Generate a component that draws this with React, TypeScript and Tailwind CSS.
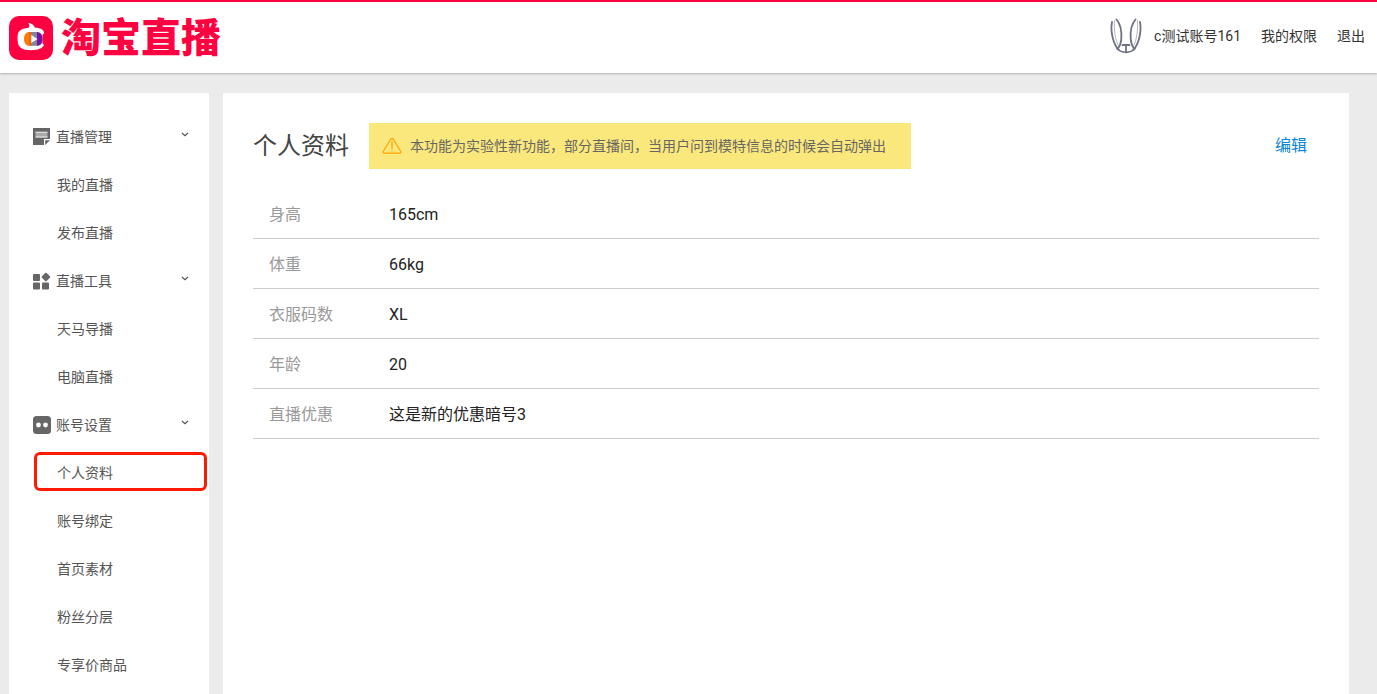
import { useState } from "react";
import type { ReactNode } from "react";
import { clsx } from "clsx";

interface MenuGroup {
  title: string;
  icon: ReactNode;
  items: string[];
}

interface ProfileField {
  label: string;
  value: string;
}

const NoteIcon = () => (
  <svg width="18" height="18" viewBox="0 0 18 18" aria-hidden="true">
    <path d="M0 0H17V11H11V17H0Z" fill="#666" />
    <path d="M12.2 12.2H17L12.2 17Z" fill="#666" />
    <path d="M2.5 4h12v5.5h-12z" fill="#aaa" />
    <path d="M2.5 4.2h12M2.5 9h12" stroke="#eee" strokeWidth="1" />
  </svg>
);

const ToolsIcon = () => (
  <svg width="18" height="18" viewBox="0 0 18 18" fill="#666" aria-hidden="true">
    <rect x="0" y="2" width="7" height="7" rx="1" />
    <rect x="0" y="10.5" width="7" height="7" rx="1" />
    <rect x="9" y="10.5" width="7" height="7" rx="1" />
    <rect x="9.6" y="1.7" width="6.6" height="6.6" rx="1" transform="rotate(45 12.9 5)" />
  </svg>
);

const AccountIcon = () => (
  <svg width="18" height="18" viewBox="0 0 18 18" aria-hidden="true">
    <rect width="18" height="18" rx="3.5" fill="#666" />
    <circle cx="5.5" cy="9" r="2.4" fill="#fff" />
    <circle cx="12.5" cy="9" r="2.4" fill="#fff" />
  </svg>
);

const menu: MenuGroup[] = [
  { title: "直播管理", icon: <NoteIcon />, items: ["我的直播", "发布直播"] },
  { title: "直播工具", icon: <ToolsIcon />, items: ["天马导播", "电脑直播"] },
  {
    title: "账号设置",
    icon: <AccountIcon />,
    items: ["个人资料", "账号绑定", "首页素材", "粉丝分层", "专享价商品"],
  },
];

const profile: ProfileField[] = [
  { label: "身高", value: "165cm" },
  { label: "体重", value: "66kg" },
  { label: "衣服码数", value: "XL" },
  { label: "年龄", value: "20" },
  { label: "直播优惠", value: "这是新的优惠暗号3" },
];

function Logo() {
  return (
    <a href="#" className="flex items-center gap-2">
      <svg width="44" height="44" viewBox="0 0 44 44" aria-hidden="true">
        <rect width="44" height="44" rx="10" fill="#ff0040" />
        <path
          d="M20 7c2.600.5 5 2.200 6 4.800 5 0 8.800 1.800 9.200 5.400l-1.700 1.600v8.700l1.500 1.500c-1.600 3.400-6 5.200-13 5.200-9 0-12.900-2.700-13.300-9.200-.2-2.600-.2-5 .2-7 .6-3.400 4.300-5.700 10.900-6.300.8-1.700.9-3-.5-4.200z"
          fill="#fff"
        />
        <path d="M21 16v13.800c-3.800.1-6-2.600-6-6.900s2.200-6.900 6-6.900z" fill="#ff7a00" />
        <path d="M20 16h3v13.800h-3z" fill="#f0631a" />
        <path d="M22.500 16h6v13.800h-6z" fill="#7d8793" />
        <path d="M28 16c3.800.2 5.500 2.900 5.500 6.900s-1.700 6.800-5.500 6.900z" fill="#7a0fa8" />
        <path d="M22.300 18.900 28.500 23l-6.200 4.100z" fill="#fff" />
      </svg>
      <span className="pt-0.5 text-[40px] leading-10 font-black text-[#ff0040]">淘宝直播</span>
    </a>
  );
}

function Avatar() {
  return (
    <svg width="32" height="36" viewBox="0 0 32 36" fill="none" stroke="#6f7280" strokeLinecap="round" aria-hidden="true">
      <path d="M2 4C.2 13 3 26 8.500 31.500" strokeWidth="1.800" />
      <path d="M6.500 1.500C10.500 6 11.800 14 11.300 21c-.3 4-1.300 7-3.300 9.500" strokeWidth="1.800" />
      <path d="M4.500 2.500C4 12 5 21 8.500 28" stroke="#b5b7bf" strokeWidth="1" />
      <path d="M30 4C31.800 13 29 26 23.500 31.500" strokeWidth="1.800" />
      <path d="M25.500 1.500C21.500 6 20.200 14 20.700 21c.3 4 1.300 7 3.300 9.500" strokeWidth="1.800" />
      <path d="M27.500 2.500C28 12 27 21 23.500 28" stroke="#b5b7bf" strokeWidth="1" />
      <path d="M7 30.500C11.500 35.600 20.500 35.600 25 30.500" strokeWidth="1.800" />
      <path d="M12.500 27h7M16 27v7" strokeWidth="1.800" />
    </svg>
  );
}

function Header() {
  return (
    <header className="flex items-center justify-between border-t-2 border-[#ff0040] bg-white h-[73px] pl-[9px] pr-3 shadow-[0_1px_2px_rgba(0,0,0,0.25)]">
      <Logo />
      <nav className="flex items-center gap-5 pb-1 text-sm text-[#333]">
        <a href="#" className="flex items-center gap-3">
          <Avatar />
          c测试账号161
        </a>
        <a href="#">我的权限</a>
        <a href="#">退出</a>
      </nav>
    </header>
  );
}

function Sidebar({ active, onSelect }: { active: string; onSelect: (item: string) => void }) {
  const [closed, setClosed] = useState<string[]>([]);

  const toggle = (title: string) => {
    setClosed((prev) => (prev.includes(title) ? prev.filter((t) => t !== title) : [...prev, title]));
  };

  return (
    <aside className="w-[200px] shrink-0 bg-white pt-5 text-sm text-[#555]">
      {menu.map((group) => (
        <section key={group.title}>
          <button
            type="button"
            onClick={() => toggle(group.title)}
            aria-expanded={!closed.includes(group.title)}
            className="flex h-12 w-full items-center gap-[5px] pl-6 pr-5 cursor-pointer"
          >
            {group.icon}
            {group.title}
            <svg width="8" height="12" viewBox="0 0 8 12" fill="none" className="ml-auto" aria-hidden="true">
              <path d="M1 2l3 2.800L7 2" stroke="#555" strokeWidth="1.200" />
            </svg>
          </button>
          {!closed.includes(group.title) && (
            <ul>
              {group.items.map((item) => (
                <li key={item} className="relative">
                  <a href="#" onClick={() => onSelect(item)} className="flex h-12 items-center pl-12">
                    {item}
                  </a>
                  {/* Red frame around the current page */}
                  <span
                    className={clsx(
                      "pointer-events-none absolute left-[25px] right-[2px] top-[3px] bottom-[6px] rounded-md border-3 border-[#ff1a00]",
                      active !== item && "hidden"
                    )}
                  />
                </li>
              ))}
            </ul>
          )}
        </section>
      ))}
    </aside>
  );
}

function Profile() {
  return (
    <main className="min-w-0 flex-1 bg-white px-[30px] pt-[30px]">
      <div className="flex items-center">
        <h1 className="text-2xl text-[#444]">个人资料</h1>
        <p className="ml-5 flex h-[46px] items-center gap-2 bg-[#fbe87c] pl-[13px] pr-[25px] text-sm text-[#666]">
          <svg width="20" height="18" viewBox="0 0 20 18" fill="none" stroke="#ffa000" aria-hidden="true">
            <path
              d="M8.700 2.200c.6-1 2-1 2.600 0l7.300 12c.6 1 .1 2-1.100 2h-15c-1.200 0-1.700-1-1.100-2z"
              strokeWidth="1.200"
            />
            <path d="M10 4.500v7.500M10 13v1.300" strokeWidth="1.200" />
          </svg>
          本功能为实验性新功能，部分直播间，当用户问到模特信息的时候会自动弹出
        </p>
        <a href="#" className="ml-auto mr-3 text-base text-[#0a84dd]">
          编辑
        </a>
      </div>

      <table className="mt-5 w-full border-separate border-spacing-0 text-left text-base">
        <tbody>
          {profile.map((field) => (
            <tr key={field.label} className="h-[50px]">
              <th scope="row" className="w-[120px] border-b border-[#ccc] pt-0.5 pl-4 font-normal text-[#999]">
                {field.label}
              </th>
              <td className="border-b border-[#ccc] pt-0.5 pl-4 text-[#222]">{field.value}</td>
            </tr>
          ))}
        </tbody>
      </table>
    </main>
  );
}

export default function App() {
  const [active, setActive] = useState("个人资料");

  return (
    <div className="flex min-h-screen flex-col bg-[#ebebeb] font-['Roboto','Noto_Sans_CJK_SC',sans-serif]">
      <Header />
      <div className="flex flex-1 gap-[14px] pt-5 pl-[9px] pr-7">
        <Sidebar active={active} onSelect={setActive} />
        <Profile />
      </div>
    </div>
  );
}
